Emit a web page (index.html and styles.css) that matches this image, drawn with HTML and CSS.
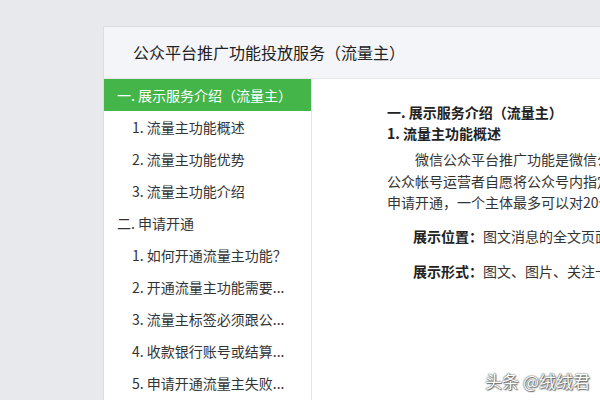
FILE: index.html
```html
<!doctype html>
<html>
<head>
<meta charset="utf-8">
<title>流量主</title>
<link rel="stylesheet" href="styles.css">
</head>
<body>
<div class="panel">
	<div class="panel_hd">公众平台推广功能投放服务（流量主）</div>
	<div class="panel_bd">
		<ul class="menu">
			<li class="ac">一. 展示服务介绍（流量主）</li>
			<li class="sub">1. 流量主功能概述</li>
			<li class="sub">2. 流量主功能优势</li>
			<li class="sub">3. 流量主功能介绍</li>
			<li>二. 申请开通</li>
			<li class="sub">1. 如何开通流量主功能？</li>
			<li class="sub">2. 开通流量主功能需要...</li>
			<li class="sub">3. 流量主标签必须跟公...</li>
			<li class="sub">4. 收款银行账号或结算...</li>
			<li class="sub">5. 申请开通流量主失败...</li>
		</ul>
		<div class="article">
			<h3>一. 展示服务介绍（流量主）</h3>
			<h4>1. 流量主功能概述</h4>
			<p class="intro">微信公众平台推广功能是微信公众平台官方唯一的广告系统，流量主功能是指<br>公众帐号运营者自愿将公众号内指定位置分享给广告主作广告展示，按月获得收入。<br>申请开通，一个主体最多可以对20个公众号开通流量主功能。</p>
			<p class="item"><b>展示位置：</b>图文消息的全文页面底部</p>
			<p class="item"><b>展示形式：</b>图文、图片、关注卡片、下载卡片</p>
		</div>
	</div>
</div>
<div class="mark">头条 @绒绒君</div>
</body>
</html>
```

FILE: styles.css
```css
*{ margin:0; padding:0}
ul{ list-style:none}
html,body{ height:100%; overflow:hidden}
body{ background:#e8e9ec; font-family:"Microsoft YaHei","Noto Sans CJK SC",sans-serif; color:#333; font-size:14px; padding:26px 0 0 103px; box-sizing:border-box}

.panel{ width:760px; height:420px; background:#fff; border-top:1px solid #dcdde0; border-left:1px solid #dcdde0}
.panel_hd{ height:51px; line-height:51px; padding-left:29px; font-size:16px; background:#f4f5f9; border-bottom:1px solid #e7e8eb; color:#222}

.panel_bd{ display:flex; height:100%}
.menu{ width:207px; border-right:1px solid #e4e4e4; flex:none}
.menu li{ height:32px; line-height:32px; padding-left:13px; font-size:14px; white-space:nowrap; color:#333}
.menu li.sub{ padding-left:28px}
.menu li.ac{ background:#44b549; color:#fff}

.article{ padding:23px 0 0 75px; white-space:nowrap}
.article h3,.article h4{ font-size:14px; line-height:21px; color:#222}
.article .intro{ text-indent:2em; line-height:21.5px; margin-top:5px}
.article .item{ padding-left:26px; margin-top:12px; line-height:21px}
.article .item + .item{ margin-top:14px}
.article b{ color:#222}

.mark{ position:absolute; right:10px; bottom:7px; font-size:17px; color:#fff; text-shadow:0 0 1px #444,0 0 2px #666,1px 1px 1px #777}
```
